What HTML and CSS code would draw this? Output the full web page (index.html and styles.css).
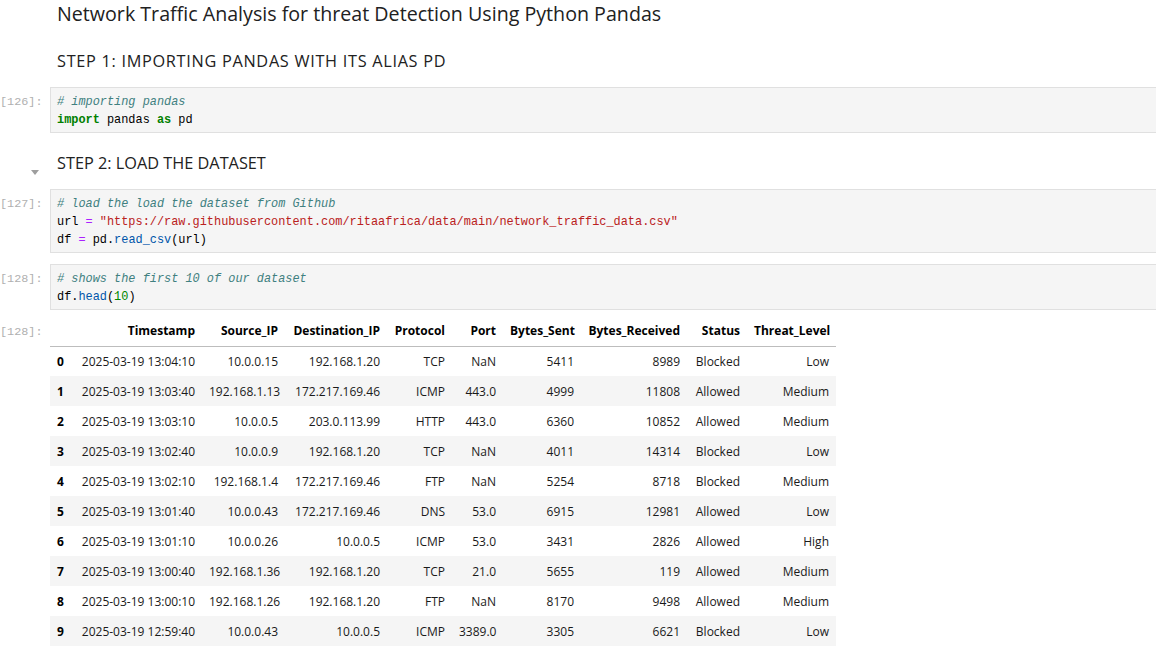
FILE: index.html
```html
<!DOCTYPE html>
<html>
<head>
<meta charset="utf-8">
<link rel="stylesheet" href="styles.css">
</head>
<body>
<div class="nb">
  <div class="cell md">
    <div class="prompt"></div>
    <h1 class="title">Network Traffic Analysis for threat Detection Using Python Pandas</h1>
  </div>
  <div class="cell md step1">
    <div class="prompt"></div>
    <h2 class="step wide">STEP 1: IMPORTING PANDAS WITH ITS ALIAS PD</h2>
  </div>
  <div class="cell code c126">
    <div class="prompt">[126]:</div>
    <pre class="input"><span class="cm"># importing pandas</span>
<span class="kw">import</span> pandas <span class="kw">as</span> pd</pre>
  </div>
  <div class="cell md step2">
    <div class="prompt"><span class="caret"></span></div>
    <h2 class="step">STEP 2: LOAD THE DATASET</h2>
  </div>
  <div class="cell code c127">
    <div class="prompt">[127]:</div>
    <pre class="input"><span class="cm"># load the load the dataset from Github</span>
url <span class="op">=</span> <span class="st">"https://raw.githubusercontent.com/ritaafrica/data/main/network_traffic_data.csv"</span>
df <span class="op">=</span> pd.<span class="pr">read_csv</span>(url)</pre>
  </div>
  <div class="cell code c128">
    <div class="prompt">[128]:</div>
    <pre class="input"><span class="cm"># shows the first 10 of our dataset</span>
df.<span class="pr">head</span>(<span class="nu">10</span>)</pre>
  </div>
  <div class="cell out">
    <div class="prompt">[128]:</div>
    <table class="df">
      <colgroup>
        <col class="w0"><col class="w1"><col class="w2"><col class="w3"><col class="w4"><col class="w5"><col class="w6"><col class="w7"><col class="w8"><col class="w9">
      </colgroup>
      <thead>
        <tr><th></th><th>Timestamp</th><th>Source_IP</th><th>Destination_IP</th><th>Protocol</th><th>Port</th><th>Bytes_Sent</th><th>Bytes_Received</th><th>Status</th><th>Threat_Level</th></tr>
      </thead>
      <tbody>
        <tr><th>0</th><td>2025-03-19 13:04:10</td><td>10.0.0.15</td><td>192.168.1.20</td><td>TCP</td><td>NaN</td><td>5411</td><td>8989</td><td>Blocked</td><td>Low</td></tr>
        <tr><th>1</th><td>2025-03-19 13:03:40</td><td>192.168.1.13</td><td>172.217.169.46</td><td>ICMP</td><td>443.0</td><td>4999</td><td>11808</td><td>Allowed</td><td>Medium</td></tr>
        <tr><th>2</th><td>2025-03-19 13:03:10</td><td>10.0.0.5</td><td>203.0.113.99</td><td>HTTP</td><td>443.0</td><td>6360</td><td>10852</td><td>Allowed</td><td>Medium</td></tr>
        <tr><th>3</th><td>2025-03-19 13:02:40</td><td>10.0.0.9</td><td>192.168.1.20</td><td>TCP</td><td>NaN</td><td>4011</td><td>14314</td><td>Blocked</td><td>Low</td></tr>
        <tr><th>4</th><td>2025-03-19 13:02:10</td><td>192.168.1.4</td><td>172.217.169.46</td><td>FTP</td><td>NaN</td><td>5254</td><td>8718</td><td>Blocked</td><td>Medium</td></tr>
        <tr><th>5</th><td>2025-03-19 13:01:40</td><td>10.0.0.43</td><td>172.217.169.46</td><td>DNS</td><td>53.0</td><td>6915</td><td>12981</td><td>Allowed</td><td>Low</td></tr>
        <tr><th>6</th><td>2025-03-19 13:01:10</td><td>10.0.0.26</td><td>10.0.0.5</td><td>ICMP</td><td>53.0</td><td>3431</td><td>2826</td><td>Allowed</td><td>High</td></tr>
        <tr><th>7</th><td>2025-03-19 13:00:40</td><td>192.168.1.36</td><td>192.168.1.20</td><td>TCP</td><td>21.0</td><td>5655</td><td>119</td><td>Allowed</td><td>Medium</td></tr>
        <tr><th>8</th><td>2025-03-19 13:00:10</td><td>192.168.1.26</td><td>192.168.1.20</td><td>FTP</td><td>NaN</td><td>8170</td><td>9498</td><td>Allowed</td><td>Medium</td></tr>
        <tr><th>9</th><td>2025-03-19 12:59:40</td><td>10.0.0.43</td><td>10.0.0.5</td><td>ICMP</td><td>3389.0</td><td>3305</td><td>6621</td><td>Blocked</td><td>Low</td></tr>
      </tbody>
    </table>
  </div>
</div>
</body>
</html>
```

FILE: styles.css
```css
html, body {
  margin: 0;
  padding: 0;
  background: #ffffff;
}
body {
  font-family: "Open Sans", "Noto Sans", sans-serif;
  color: #212121;
  overflow: hidden;
}
.nb {
  display: flex;
  flex-direction: column;
}
.cell {
  display: flex;
  align-items: flex-start;
}
.prompt {
  width: 50px;
  flex: 0 0 50px;
  box-sizing: border-box;
  padding-right: 8px;
  text-align: right;
  font-family: "Liberation Mono", monospace;
  font-size: 11.8px;
  color: #b0b0b0;
  position: relative;
}
.title {
  margin: 0;
  padding: 0 0 0 7px;
  font-weight: 400;
  font-size: 19.65px;
  line-height: 28px;
  color: #212121;
}
.step {
  margin: 0;
  padding: 0 0 0 7px;
  font-weight: 400;
  font-size: 16.3px;
  line-height: 22px;
  color: #212121;
}
.step.wide {
  letter-spacing: 0.7px;
}
.step1 { margin-top: 22px; }
.c126 { margin-top: 15px; }
.step2 { margin-top: 19px; }
.c127 { margin-top: 15px; }
.c128 { margin-top: 11px; }
.out { margin-top: 6px; }

.code .prompt {
  padding-top: 6px;
  line-height: 18px;
}
.input {
  flex: 1 1 auto;
  margin: 0;
  background: #f5f5f5;
  border: 1px solid #e0e0e0;
  border-right: none;
  padding: 5px 6px 3px;
  font-family: "Liberation Mono", monospace;
  font-size: 11.9px;
  line-height: 18px;
  color: #000;
  white-space: pre;
}
.cm { color: #408080; font-style: italic; }
.kw { color: #008000; font-weight: bold; }
.op { color: #aa22ff; }
.st { color: #ba2121; }
.pr { color: #0055aa; }
.nu { color: #008800; }

.caret {
  position: absolute;
  left: 31px;
  top: 18px;
  width: 0;
  height: 0;
  border-left: 4px solid transparent;
  border-right: 4px solid transparent;
  border-top: 5px solid #9e9e9e;
}

.out .prompt {
  padding-top: 8px;
  line-height: 16px;
}
.df {
  border-collapse: collapse;
  table-layout: fixed;
  width: 786px;
  font-size: 12px;
  color: #1a1a1a;
}
.w0 { width: 20px; }
.w1 { width: 132px; }
.w2 { width: 83px; }
.w3 { width: 102px; }
.w4 { width: 65px; }
.w5 { width: 51px; }
.w6 { width: 78px; }
.w7 { width: 106px; }
.w8 { width: 60px; }
.w9 { width: 89px; }
.df th, .df td {
  padding: 0 7px;
  text-align: right;
  white-space: nowrap;
  height: 30px;
  box-sizing: border-box;
}
.df thead th {
  font-weight: 700;
  color: #000;
  border-bottom: 1px solid #bdbdbd;
}
.df tbody th {
  font-weight: 700;
  color: #000;
  text-align: left;
}
.df tbody tr:nth-child(even) {
  background: #f5f5f5;
}
```
